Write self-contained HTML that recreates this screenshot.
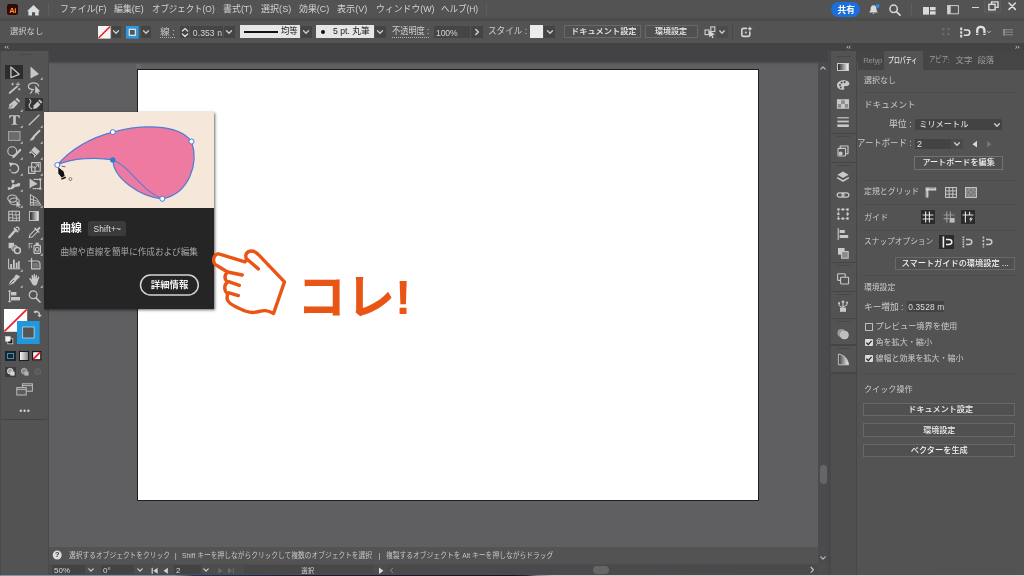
<!DOCTYPE html><html lang="ja"><head><meta charset="utf-8"><title>Adobe Illustrator</title><style>
html,body{margin:0;padding:0;background:#535353;}
body{width:1024px;height:576px;overflow:hidden;position:relative;font-family:"Liberation Sans","Noto Sans CJK JP",sans-serif;}
#app{position:absolute;left:0;top:0;width:1024px;height:576px;overflow:hidden;background:#535353;filter:blur(0.6px);}
.b,.g,.l,.t{position:absolute;}
.g{overflow:visible;pointer-events:none;}
.l{white-space:nowrap;}
.t{white-space:nowrap;line-height:1.2;transform-origin:0 50%;font-family:"Liberation Sans","Noto Sans CJK JP",sans-serif;}
</style></head><body><div id="app">
<div class="b" style="left:0px;top:16.2px;width:1024px;height:5.400000000000002px;background:linear-gradient(180deg,#535353 0,#4f4f4f 35%,#4a4a4a 62%,#4c4c4c 75%,#535353 100%);"></div>
<div class="b" style="left:0px;top:42.75px;width:1024px;height:19.25px;background:#434345;"></div>
<div class="b" style="left:0px;top:50.75px;width:47.5px;height:525.25px;background:#535353;"></div>
<div class="b" style="left:47.5px;top:50.75px;width:1.7000000000000028px;height:525.25px;background:#4a4a4b;"></div>
<div class="b" style="left:0px;top:50.75px;width:1.2px;height:525.25px;background:#4b4b4b;"></div>
<div class="b" style="left:49px;top:62px;width:768.5px;height:485px;background:#5f5f61;"></div>
<div class="b" style="left:49px;top:62px;width:768.5px;height:2.5999999999999943px;background:linear-gradient(180deg,#4e4e50,#5f5f61);"></div>
<span class="l" style="left:136.2px;top:63.72px;font-size:4.6px;line-height:5.52px;color:#7d7d80;font-weight:normal;">01</span>
<div class="b" style="left:137px;top:69px;width:622.4px;height:432px;background:#fff;border:1px solid #1e1e1e;box-sizing:border-box;"></div>
<div class="b" style="left:817.5px;top:62px;width:10.5px;height:502px;background:#4b4b4d;"></div>
<div class="b" style="left:819.6px;top:465px;width:7.199999999999932px;height:18.5px;background:#646666;border-radius:3.6px;"></div>
<svg class="g" style="left:818px;top:63.3px;" width="10" height="10"><path transform="rotate(180 5 5)" d="M2.8 3.9 L5 6.1 L7.2 3.9" fill="none" stroke="#b8b8b8" stroke-width="1.3" stroke-linecap="round" stroke-linejoin="round"/></svg>
<svg class="g" style="left:818px;top:552.5px;" width="10" height="10"><path d="M2.8 3.9 L5 6.1 L7.2 3.9" fill="none" stroke="#b8b8b8" stroke-width="1.3" stroke-linecap="round" stroke-linejoin="round"/></svg>
<div class="b" style="left:49px;top:547px;width:768.5px;height:17px;background:#535353;"></div>
<div class="b" style="left:49px;top:564px;width:779.5px;height:10.5px;background:#4d4d4d;"></div>
<div class="b" style="left:828px;top:42.75px;width:196px;height:8.25px;background:#434345;"></div>
<div class="b" style="left:828px;top:51px;width:2.5px;height:525px;background:#48484a;"></div>
<div class="b" style="left:830.5px;top:51px;width:25.5px;height:322px;background:#535353;"></div>
<div class="b" style="left:830.5px;top:373px;width:25.5px;height:203px;background:#4f4f4f;"></div>
<div class="b" style="left:856px;top:51px;width:1.3999999999999773px;height:525px;background:#464646;"></div>
<div class="b" style="left:857.5px;top:51px;width:166.5px;height:18.5px;background:#454545;"></div>
<div class="b" style="left:883.5px;top:51px;width:39.0px;height:18.5px;background:#535353;"></div>
<div class="b" style="left:857.5px;top:69.5px;width:166.5px;height:506.5px;background:#535353;"></div>
<div class="b" style="left:0px;top:574.5px;width:1024px;height:1.5px;background:linear-gradient(90deg,#8096a6 0,#7d93a4 17%,#20306a 19%,#141c3c 30%,#10142a 50%,#222a44 51.5%,#8a9096 52.5%,#c9cbcc 54%,#d6d6d6 100%);"></div>
<div class="b" style="left:7.2px;top:4.2px;width:11.0px;height:10.600000000000001px;background:#33080a;border-radius:2.2px;"></div>
<span class="l" style="left:9.2px;top:5.50px;font-size:7.6px;line-height:9.12px;color:#ff9a1f;font-weight:bold;letter-spacing:-0.3px;">Ai</span>
<svg class="g" style="left:26px;top:3px;" width="16" height="14"><path d="M7.5 2 L14 8.2 L12.6 8.2 L12.6 12.4 L9.1 12.4 L9.1 9.2 L6 9.2 L6 12.4 L2.4 12.4 L2.4 8.2 L1 8.2 Z" fill="#dcdcdc"/></svg>
<div class="b" style="left:48px;top:3px;width:1px;height:13px;background:#5e5e5e;"></div>
<span class="t" style="left:60.0px;top:3.6px;font-size:9.3px;color:#d2d2d2;transform:scaleX(0.948);">ファイル(F)</span>
<span class="t" style="left:114.0px;top:3.6px;font-size:9.3px;color:#d2d2d2;transform:scaleX(0.957);">編集(E)</span>
<span class="t" style="left:152.0px;top:3.6px;font-size:9.3px;color:#d2d2d2;transform:scaleX(0.906);">オブジェクト(O)</span>
<span class="t" style="left:223.0px;top:3.6px;font-size:9.3px;color:#d2d2d2;transform:scaleX(0.962);">書式(T)</span>
<span class="t" style="left:261.0px;top:3.6px;font-size:9.3px;color:#d2d2d2;transform:scaleX(0.974);">選択(S)</span>
<span class="t" style="left:299.0px;top:3.6px;font-size:9.3px;color:#d2d2d2;transform:scaleX(0.959);">効果(C)</span>
<span class="t" style="left:337.0px;top:3.6px;font-size:9.3px;color:#d2d2d2;transform:scaleX(0.978);">表示(V)</span>
<span class="t" style="left:375.5px;top:3.6px;font-size:9.3px;color:#d2d2d2;transform:scaleX(0.952);">ウィンドウ(W)</span>
<span class="t" style="left:440.5px;top:3.6px;font-size:9.3px;color:#d2d2d2;transform:scaleX(0.911);">ヘルプ(H)</span>
<div class="b" style="left:486px;top:3px;width:1px;height:13px;background:#5e5e5e;"></div>
<div class="b" style="left:831px;top:2.2px;width:29.399999999999977px;height:15.2px;background:#1a6fdc;border-radius:7.6px;"></div>
<span class="t" style="left:837.5px;top:4.5px;font-size:8.7px;color:#fff;font-weight:bold;">共有</span>
<svg class="g" style="left:867px;top:3px;" width="14" height="14"><path d="M6.5 2.2 C4.3 2.2 3.6 4 3.6 5.8 C3.6 7.8 2.8 8.6 2.2 9.4 L10.8 9.4 C10.2 8.6 9.4 7.8 9.4 5.8 C9.4 4 8.7 2.2 6.5 2.2 Z M5.3 10.2 a1.3 1.3 0 0 0 2.4 0 Z" fill="#d8d8d8"/><circle cx="10.6" cy="3" r="1.9" fill="#2b8cf0"/></svg>
<svg class="g" style="left:887px;top:2px;" width="16" height="16"><circle cx="6.6" cy="6.8" r="3.7" fill="none" stroke="#d8d8d8" stroke-width="1.5"/><path d="M9.4 9.6 L13 13.2" stroke="#d8d8d8" stroke-width="1.7" stroke-linecap="round"/></svg>
<div class="b" style="left:910.5px;top:3px;width:1.0px;height:13px;background:#5e5e5e;"></div>
<svg class="g" style="left:923px;top:6.8px;" width="13" height="8"><rect x="0" y="0" width="6" height="7.6" fill="#dadada"/><rect x="7" y="0" width="5.6" height="3.3" fill="#dadada"/><rect x="7" y="4.3" width="5.6" height="3.3" fill="#dadada"/></svg>
<svg class="g" style="left:946.5px;top:5.4px;" width="13" height="10"><rect x="0.6" y="0.6" width="10.8" height="8.2" fill="none" stroke="#cdcdcd" stroke-width="1"/><rect x="0.7" y="0.7" width="3" height="8" fill="#d0d0d0"/></svg>
<div class="b" style="left:984px;top:-1px;width:16.5px;height:13.6px;background:#555555;border:1px solid #5d5d5d;box-sizing:border-box;"></div>
<div class="b" style="left:971.5px;top:6.8px;width:7.5px;height:1.5000000000000009px;background:#d6d6d6;"></div>
<svg class="g" style="left:988px;top:1px;" width="13" height="11"><rect x="0.9" y="3.3" width="6.2" height="5.6" fill="none" stroke="#dcdcdc" stroke-width="1.4"/><path d="M3.6 3 L3.6 0.9 L10 0.9 L10 6.4 L7.4 6.4" fill="none" stroke="#dcdcdc" stroke-width="1.4"/></svg>
<svg class="g" style="left:1008px;top:2px;" width="9" height="9"><path d="M1 1 L7.4 7.4 M7.4 1 L1 7.4" stroke="#dcdcdc" stroke-width="1.5" stroke-linecap="round"/></svg>
<span class="t" style="left:10.0px;top:26.8px;font-size:8.3px;color:#cfcfcf;">選択なし</span>
<svg class="g" style="left:97.5px;top:25.5px;" width="13" height="13"><rect x="0" y="0" width="12.6" height="12.6" fill="#f4f4f4"/><path d="M0.6 12 L12 0.6" stroke="#e8212b" stroke-width="1.5"/></svg>
<div class="b" style="left:111.5px;top:25.5px;width:9.5px;height:12.700000000000003px;background:#444444;"></div>
<svg class="g" style="left:111.2px;top:27.200000000000003px;" width="10" height="10"><path d="M2.5 3.75 L5 6.25 L7.5 3.75" fill="none" stroke="#cccccc" stroke-width="1.35" stroke-linecap="round" stroke-linejoin="round"/></svg>
<svg class="g" style="left:126px;top:25.5px;" width="13" height="13"><rect x="0" y="0" width="12.6" height="12.6" fill="#2c98e0"/><rect x="3.3" y="3.3" width="6" height="6" fill="#555" stroke="#f2f2f2" stroke-width="1.1"/></svg>
<div class="b" style="left:140.5px;top:25.5px;width:10.5px;height:12.700000000000003px;background:#444444;"></div>
<svg class="g" style="left:141px;top:27.200000000000003px;" width="10" height="10"><path d="M2.5 3.75 L5 6.25 L7.5 3.75" fill="none" stroke="#cccccc" stroke-width="1.35" stroke-linecap="round" stroke-linejoin="round"/></svg>
<span class="t" style="left:160.2px;top:26.1px;font-size:9.4px;color:#cfcfcf;">線 :</span>
<div class="b" style="left:160px;top:35.6px;width:15px;height:1.0px;border-bottom:1px dotted #b0b0b0;"></div>
<div class="b" style="left:179.5px;top:25.5px;width:9.5px;height:12.700000000000003px;background:#444444;"></div>
<svg class="g" style="left:179.5px;top:25.5px;" width="10" height="13"><path d="M2.4 5 L5 2.4 L7.6 5 M2.4 8 L5 10.6 L7.6 8" fill="none" stroke="#d8d8d8" stroke-width="1.4" stroke-linecap="round" stroke-linejoin="round"/></svg>
<div class="b" style="left:189.5px;top:25.5px;width:33.5px;height:12.700000000000003px;background:#454545;"></div>
<span class="l" style="left:192.8px;top:27.56px;font-size:8.6px;line-height:10.32px;color:#d4d4d4;font-weight:normal;letter-spacing:0.084px;">0.353 n</span>
<div class="b" style="left:224px;top:25.5px;width:10.5px;height:12.700000000000003px;background:#444444;"></div>
<svg class="g" style="left:224.2px;top:27.200000000000003px;" width="10" height="10"><path d="M2.5 3.75 L5 6.25 L7.5 3.75" fill="none" stroke="#cccccc" stroke-width="1.35" stroke-linecap="round" stroke-linejoin="round"/></svg>
<div class="b" style="left:240px;top:25px;width:59.5px;height:13.200000000000003px;background:#e6e6e6;"></div>
<div class="b" style="left:244px;top:31.2px;width:33.5px;height:1.8000000000000007px;background:#111;"></div>
<span class="t" style="left:281.0px;top:26.4px;font-size:9.0px;color:#1c1c1c;transform:scaleX(0.924);">均等</span>
<div class="b" style="left:300.5px;top:25.5px;width:11.0px;height:12.700000000000003px;background:#444444;"></div>
<svg class="g" style="left:301px;top:27.200000000000003px;" width="10" height="10"><path d="M2.5 3.75 L5 6.25 L7.5 3.75" fill="none" stroke="#cccccc" stroke-width="1.35" stroke-linecap="round" stroke-linejoin="round"/></svg>
<div class="b" style="left:316px;top:25px;width:58px;height:13.200000000000003px;background:#e6e6e6;"></div>
<div class="b" style="left:321.4px;top:30.4px;width:3.2000000000000455px;height:3.200000000000003px;background:#111;border-radius:2px;"></div>
<span class="t" style="left:332.5px;top:26.4px;font-size:9.0px;color:#1c1c1c;transform:scaleX(0.964);">5 pt. 丸筆</span>
<div class="b" style="left:375px;top:25.5px;width:10.5px;height:12.700000000000003px;background:#444444;"></div>
<svg class="g" style="left:375.2px;top:27.200000000000003px;" width="10" height="10"><path d="M2.5 3.75 L5 6.25 L7.5 3.75" fill="none" stroke="#cccccc" stroke-width="1.35" stroke-linecap="round" stroke-linejoin="round"/></svg>
<span class="t" style="left:392.0px;top:26.2px;font-size:9.2px;color:#cfcfcf;transform:scaleX(0.892);">不透明度 :</span>
<div class="b" style="left:392px;top:35.6px;width:37px;height:1.0px;border-bottom:1px dotted #b0b0b0;"></div>
<div class="b" style="left:433.5px;top:25.5px;width:36.5px;height:12.700000000000003px;background:#454545;"></div>
<span class="l" style="left:436px;top:27.56px;font-size:8.6px;line-height:10.32px;color:#d4d4d4;font-weight:normal;letter-spacing:-0.132px;">100%</span>
<div class="b" style="left:471px;top:25.5px;width:11.5px;height:12.700000000000003px;background:#444444;"></div>
<svg class="g" style="left:472px;top:27.2px;" width="10" height="10"><path d="M3.8 2.4 L6.4 5 L3.8 7.6" fill="none" stroke="#d8d8d8" stroke-width="1.4" stroke-linecap="round" stroke-linejoin="round"/></svg>
<span class="t" style="left:487.8px;top:26.3px;font-size:9.2px;color:#cfcfcf;transform:scaleX(0.934);">スタイル :</span>
<div class="b" style="left:530px;top:25px;width:13.200000000000045px;height:13.200000000000003px;background:#ececec;"></div>
<div class="b" style="left:544.2px;top:25.5px;width:10.799999999999955px;height:12.700000000000003px;background:#444444;"></div>
<svg class="g" style="left:544.6px;top:27.200000000000003px;" width="10" height="10"><path d="M2.5 3.75 L5 6.25 L7.5 3.75" fill="none" stroke="#cccccc" stroke-width="1.35" stroke-linecap="round" stroke-linejoin="round"/></svg>
<div class="b" style="left:563.5px;top:24.6px;width:77.0px;height:13.199999999999996px;background:#505050;border:1px solid #696969;box-sizing:border-box;"></div>
<span class="t" style="left:571.0px;top:26.5px;font-size:8.2px;color:#f0f0f0;font-weight:500;">ドキュメント設定</span>
<div class="b" style="left:645px;top:24.6px;width:52.5px;height:13.199999999999996px;background:#505050;border:1px solid #696969;box-sizing:border-box;"></div>
<span class="t" style="left:655.0px;top:26.6px;font-size:8.0px;color:#f0f0f0;font-weight:500;">環境設定</span>
<svg class="g" style="left:704px;top:25.6px;" width="13" height="13"><rect x="1" y="4" width="4" height="4.6" fill="none" stroke="#cfcfcf" stroke-width="1.1"/><rect x="6.8" y="0.9" width="4" height="4.6" fill="none" stroke="#cfcfcf" stroke-width="1.1"/><path d="M4.8 4.6 L11 8.4 L8.4 9 L9.6 11.6 L8.4 12.2 L7.2 9.6 L5.4 11.4 Z" fill="#d8d8d8"/></svg>
<div class="b" style="left:717px;top:25.5px;width:11.399999999999977px;height:12.700000000000003px;background:#4b4b4b;"></div>
<svg class="g" style="left:716.9px;top:26.6px;" width="10" height="10"><path d="M2.7 3.85 L5 6.15 L7.3 3.85" fill="none" stroke="#cccccc" stroke-width="1.35" stroke-linecap="round" stroke-linejoin="round"/></svg>
<div class="b" style="left:731.6px;top:24px;width:1.0px;height:16px;background:#494949;"></div>
<svg class="g" style="left:740px;top:26.4px;" width="13" height="13"><path d="M6.4 2.4 L3.6 2.4 Q1.8 2.4 1.8 4.2 L1.8 8.6 Q1.8 10.4 3.6 10.4 L8 10.4 Q9.8 10.4 9.8 8.6 L9.8 6" fill="none" stroke="#d2d2d2" stroke-width="1.6" stroke-linecap="round"/><circle cx="5.8" cy="6.4" r="1" fill="#d2d2d2"/><path d="M9.9 0 L10.6 2 L12.6 2.7 L10.6 3.4 L9.9 5.4 L9.2 3.4 L7.2 2.7 L9.2 2 Z" fill="#dcdcdc"/></svg>
<svg class="g" style="left:942.4px;top:27.8px;" width="9" height="9"><g fill="#6a6a6a"><rect x="0" y="0" width="2.4" height="2.4"/><rect x="5.2" y="0" width="2.4" height="2.4"/><rect x="0" y="5" width="2.4" height="2.4"/><rect x="5.2" y="5" width="2.4" height="2.4"/></g></svg>
<svg class="g" style="left:958.5px;top:26.5px;" width="13" height="12"><path d="M2.2 0.6 L2.2 10.8" stroke="#e0e0e0" stroke-width="2" stroke-dasharray="2.6 1"/><path d="M4.8 3 L8.2 3 Q10.8 3 10.8 5.6 Q10.8 8.2 8.2 8.2 L4.8 8.2" fill="none" stroke="#e0e0e0" stroke-width="1.6"/></svg>
<svg class="g" style="left:974.6px;top:25.4px;" width="12" height="12"><path d="M2.2 10 L2.2 5.6 Q2.2 1.8 5.8 1.8 Q9.4 1.8 9.4 5.6 L9.4 10" fill="none" stroke="#e0e0e0" stroke-width="2.3"/><path d="M0.8 8.4 L3.2 8.4 M8 8.4 L10.4 8.4" stroke="#535353" stroke-width="0.9"/></svg>
<svg class="g" style="left:983.8px;top:27px;" width="10" height="10"><path d="M3.4 4.2 L5 5.8 L6.6 4.2" fill="none" stroke="#bbb" stroke-width="1" stroke-linecap="round" stroke-linejoin="round"/></svg>
<svg class="g" style="left:1003px;top:28.6px;" width="11" height="7"><g fill="#7c7c7c"><rect x="0" y="0" width="10" height="1.4"/><rect x="0" y="2.5" width="10" height="1.4"/><rect x="0" y="5" width="10" height="1.4"/></g><rect x="0" y="0" width="2" height="6.4" fill="#8a8a8a"/></svg>
<svg class="g" style="left:4.4px;top:44.6px;" width="6" height="5"><path d="M2.2 0.9 L1 2.2 L2.2 3.5 M4.4 0.9 L3.2 2.2 L4.4 3.5" fill="none" stroke="#c4c4c4" stroke-width="0.9"/></svg>
<svg class="g" style="left:846px;top:44.6px;" width="6" height="5"><path d="M2.2 0.9 L1 2.2 L2.2 3.5 M4.4 0.9 L3.2 2.2 L4.4 3.5" fill="none" stroke="#c4c4c4" stroke-width="0.9"/></svg>
<svg class="g" style="left:1014px;top:44.6px;" width="6" height="5"><path d="M2.2 0.9 L1 2.2 L2.2 3.5 M4.4 0.9 L3.2 2.2 L4.4 3.5" fill="none" stroke="#c4c4c4" stroke-width="0.9" transform="translate(6 0) scale(-1 1)"/></svg>
<div class="b" style="left:18px;top:54.2px;width:12.600000000000001px;height:1.1999999999999957px;background:#484848;"></div>
<div class="b" style="left:5px;top:64.8px;width:18px;height:14.5px;background:#2c2c2c;"></div>
<svg class="g" style="left:5px;top:64.25px;" width="18" height="16"><path d="M5.9 2.9 L5.9 13.6 L14.2 10.3 Z" fill="none" stroke="#c6c6c6" stroke-linecap="round" stroke-linejoin="round" stroke-width="1.3"/></svg>
<svg class="g" style="left:25px;top:64.25px;" width="18" height="16"><path d="M5.5 2.4 L5.5 14.4 L14 10 Z" fill="#c6c6c6"/></svg>
<svg class="g" style="left:40.2px;top:77.05px;" width="4" height="4"><path d="M2.7 0.2 L2.7 2.7 L0.2 2.7 Z" fill="#c6c6c6"/></svg>
<svg class="g" style="left:5px;top:80.25px;" width="18" height="16"><path d="M4.6 13 L12 6.6" fill="none" stroke="#c6c6c6" stroke-linecap="round" stroke-linejoin="round" stroke-width="1.7"/><path d="M13 2.6 L13 6 M11.3 4.3 L14.7 4.3 M7.6 3.2 L7.6 5 M6.7 4.1 L8.5 4.1 M14.2 8.4 L14.2 10 M13.4 9.2 L15 9.2" fill="none" stroke="#c6c6c6" stroke-linecap="round" stroke-linejoin="round" stroke-width="0.9"/></svg>
<svg class="g" style="left:25px;top:80.25px;" width="18" height="16"><path d="M8.6 9.6 C4.6 9.6 3.4 7.6 3.4 6.3 C3.4 4 6 2.8 8.6 2.8 C11.4 2.8 13.6 4.2 13.6 6 M6.6 9.4 C7.6 10.6 6.8 12.6 5.4 13.2" fill="none" stroke="#c6c6c6" stroke-linecap="round" stroke-linejoin="round" stroke-width="1.2"/><path d="M10.2 5.6 L10.2 14 L12 12.2 L13.2 14.6 L14.2 14.1 L13 11.8 L15.4 11.6 Z" fill="#c6c6c6"/></svg>
<svg class="g" style="left:5px;top:96.25px;" width="18" height="16"><path d="M3.4 13 L4.6 8.2 L9.6 4 L13 7.4 L8.6 12.2 Z" fill="#c6c6c6"/><path d="M10.4 3.2 L12 1.8 L15.2 5 L13.8 6.6 Z" fill="#c6c6c6"/><path d="M3.6 12.8 L7.6 9" stroke="#535353" stroke-width="0.8"/></svg>
<svg class="g" style="left:20.200000000000003px;top:109.05px;" width="4" height="4"><path d="M2.7 0.2 L2.7 2.7 L0.2 2.7 Z" fill="#c6c6c6"/></svg>
<div class="b" style="left:25px;top:97.6px;width:18px;height:13.100000000000009px;background:#333;"></div>
<svg class="g" style="left:25px;top:96.25px;" width="18" height="16"><path d="M8 13 L8.8 9.2 L12.6 5.6 L15.4 8.4 L11.8 12.2 Z" fill="#c6c6c6"/><path d="M13.2 4.8 L14.6 3.4 L17.4 6.2 L16 7.6 Z" fill="#c6c6c6"/><path d="M4.6 3.4 C6.4 4.2 6 6 5 7.4 C3.8 9 3.6 11.6 6.6 12.8" fill="none" stroke="#c6c6c6" stroke-linecap="round" stroke-linejoin="round" stroke-width="1.1"/></svg>
<svg class="g" style="left:8.6px;top:115.4px;" width="12" height="11"><path d="M0.4 0.2 L10.6 0.2 L10.8 3.2 L10 3.2 C9.6 1.6 9 1.2 7.6 1.2 L6.8 1.2 L6.8 8 C6.8 8.8 7.2 9 8.4 9.1 L8.4 9.7 L2.6 9.7 L2.6 9.1 C3.8 9 4.2 8.8 4.2 8 L4.2 1.2 L3.4 1.2 C2 1.2 1.4 1.6 1 3.2 L0.2 3.2 Z" fill="#c6c6c6"/></svg>
<svg class="g" style="left:20.200000000000003px;top:125.0px;" width="4" height="4"><path d="M2.7 0.2 L2.7 2.7 L0.2 2.7 Z" fill="#c6c6c6"/></svg>
<svg class="g" style="left:25px;top:112.25px;" width="18" height="16"><path d="M4.2 12.8 L14 3.2" fill="none" stroke="#c6c6c6" stroke-linecap="round" stroke-linejoin="round" stroke-width="1.3"/></svg>
<svg class="g" style="left:40.2px;top:125.05px;" width="4" height="4"><path d="M2.7 0.2 L2.7 2.7 L0.2 2.7 Z" fill="#c6c6c6"/></svg>
<svg class="g" style="left:5px;top:128.25px;" width="18" height="16"><rect x="3.6" y="3.6" width="11.4" height="8.8" fill="#6b6b6b" stroke="#a9a9a9" stroke-width="1"/></svg>
<svg class="g" style="left:20.200000000000003px;top:141.04999999999998px;" width="4" height="4"><path d="M2.7 0.2 L2.7 2.7 L0.2 2.7 Z" fill="#c6c6c6"/></svg>
<svg class="g" style="left:25px;top:128.25px;" width="18" height="16"><path d="M14.4 2.8 L8.6 8.8" fill="none" stroke="#c6c6c6" stroke-linecap="round" stroke-linejoin="round" stroke-width="2"/><path d="M8.8 8 L10 9.4 C9 11.6 7 12.8 4.4 12.6 C5.6 11.6 6 9.4 8.8 8 Z" fill="#c6c6c6"/></svg>
<svg class="g" style="left:40.2px;top:141.04999999999998px;" width="4" height="4"><path d="M2.7 0.2 L2.7 2.7 L0.2 2.7 Z" fill="#c6c6c6"/></svg>
<svg class="g" style="left:5px;top:144.25px;" width="18" height="16"><circle cx="7.2" cy="7.2" r="4.4" fill="none" stroke="#c6c6c6" stroke-linecap="round" stroke-linejoin="round" stroke-width="1.1"/><path d="M9 12.6 L15.2 6" fill="none" stroke="#c6c6c6" stroke-linecap="round" stroke-linejoin="round" stroke-width="2.2"/><path d="M7 14.4 L8 12 L9.4 13.4 Z" fill="#c6c6c6"/></svg>
<svg class="g" style="left:20.200000000000003px;top:157.04999999999998px;" width="4" height="4"><path d="M2.7 0.2 L2.7 2.7 L0.2 2.7 Z" fill="#c6c6c6"/></svg>
<svg class="g" style="left:25px;top:144.25px;" width="18" height="16"><path d="M9.6 2.6 L15 7.4 L9.4 13.6 L4 8.8 Z" fill="#c6c6c6"/><path d="M6 6.6 L11.4 11.4" stroke="#535353" stroke-width="1"/><path d="M5.6 9.4 L8.8 12.4" stroke="#3a3a3a" stroke-width="1.6"/></svg>
<svg class="g" style="left:40.2px;top:157.04999999999998px;" width="4" height="4"><path d="M2.7 0.2 L2.7 2.7 L0.2 2.7 Z" fill="#c6c6c6"/></svg>
<svg class="g" style="left:5px;top:160.25px;" width="18" height="16"><path d="M6 4.6 C9.4 2.6 13.6 4.6 13.6 8.4 C13.6 11.6 10.6 13.6 7.4 12.6" fill="none" stroke="#c6c6c6" stroke-linecap="round" stroke-linejoin="round" stroke-width="1.4"/><path d="M4 2.6 L8.6 3 L5.4 7 Z" fill="#c6c6c6"/><path d="M5 9.4 C5 10.6 5.6 11.6 6.6 12.2" fill="none" stroke="#c6c6c6" stroke-linecap="round" stroke-linejoin="round" stroke-width="1" stroke-dasharray="1.2 1.4"/></svg>
<svg class="g" style="left:20.200000000000003px;top:173.04999999999998px;" width="4" height="4"><path d="M2.7 0.2 L2.7 2.7 L0.2 2.7 Z" fill="#c6c6c6"/></svg>
<svg class="g" style="left:25px;top:160.25px;" width="18" height="16"><rect x="3.6" y="7" width="6.4" height="6.4" fill="none" stroke="#c6c6c6" stroke-linecap="round" stroke-linejoin="round" stroke-width="1.1"/><rect x="6.6" y="2.6" width="8.6" height="8.6" fill="none" stroke="#c6c6c6" stroke-linecap="round" stroke-linejoin="round" stroke-width="1.1"/><path d="M9.6 8.2 L13.4 4.4 M10.8 4.2 L13.6 4.2 L13.6 7" fill="none" stroke="#c6c6c6" stroke-linecap="round" stroke-linejoin="round" stroke-width="1"/></svg>
<svg class="g" style="left:40.2px;top:173.04999999999998px;" width="4" height="4"><path d="M2.7 0.2 L2.7 2.7 L0.2 2.7 Z" fill="#c6c6c6"/></svg>
<svg class="g" style="left:5px;top:176.25px;" width="18" height="16"><path d="M3.4 12.4 C5 12.8 6.4 11.4 7 9.6 C7.8 7 9 8.6 10.4 8.4 C12.4 8 13.4 6.4 15 7.4 C15.6 9 14.8 10.2 13.6 10.6 C11.6 11.2 10.4 10.4 9 12 C7.6 13.4 5 14 3.4 12.4 Z" fill="#c6c6c6"/><path d="M6.4 3.4 C7.4 4.4 8.6 4.4 9.6 3.6 C9 5.4 9.6 6.6 8 7.6 C7 6.6 6 5.4 6.4 3.4 Z" fill="#c6c6c6"/><circle cx="4" cy="12.6" r="1.3" fill="#c6c6c6"/></svg>
<svg class="g" style="left:20.200000000000003px;top:189.04999999999998px;" width="4" height="4"><path d="M2.7 0.2 L2.7 2.7 L0.2 2.7 Z" fill="#c6c6c6"/></svg>
<svg class="g" style="left:25px;top:176.25px;" width="18" height="16"><path d="M4.6 2.6 L4.6 12.6 L7.2 10.4 L12.6 8 Z" fill="#c6c6c6"/><path d="M9 3.4 L15.4 3.4 L15.4 12.6 L8 12.6" fill="none" stroke="#c6c6c6" stroke-linecap="round" stroke-linejoin="round" stroke-width="1.1" stroke-dasharray="1.4 1.1"/><rect x="14.2" y="2.4" width="2.2" height="2.2" fill="#c6c6c6"/><rect x="14.2" y="11.4" width="2.2" height="2.2" fill="#c6c6c6"/></svg>
<svg class="g" style="left:5px;top:192.25px;" width="18" height="16"><ellipse cx="7.4" cy="6.6" rx="4.6" ry="3.6" fill="none" stroke="#c6c6c6" stroke-linecap="round" stroke-linejoin="round" stroke-width="1.1"/><ellipse cx="9.4" cy="9.4" rx="4.8" ry="3.4" fill="none" stroke="#c6c6c6" stroke-linecap="round" stroke-linejoin="round" stroke-width="1.1"/><path d="M11.4 8.4 L11.4 15.4 L13 13.8 L14 15.8 L15 15.4 L14 13.4 L16.2 13.2 Z" fill="#c6c6c6"/></svg>
<svg class="g" style="left:20.200000000000003px;top:205.04999999999998px;" width="4" height="4"><path d="M2.7 0.2 L2.7 2.7 L0.2 2.7 Z" fill="#c6c6c6"/></svg>
<svg class="g" style="left:25px;top:192.25px;" width="18" height="16"><path d="M5.4 2.6 L5.4 13 M5.4 2.6 L11.6 6.4 L15.4 12.4 M5.4 7 L12.6 9.4 M8.4 4.4 L8.4 12.8 M5.4 13 L15.8 13 M5.4 10.4 L14.4 11.2" fill="none" stroke="#c6c6c6" stroke-linecap="round" stroke-linejoin="round" stroke-width="0.95"/></svg>
<svg class="g" style="left:40.2px;top:205.04999999999998px;" width="4" height="4"><path d="M2.7 0.2 L2.7 2.7 L0.2 2.7 Z" fill="#c6c6c6"/></svg>
<svg class="g" style="left:5px;top:208.25px;" width="18" height="16"><rect x="3.8" y="3.2" width="10.6" height="9.6" fill="none" stroke="#c6c6c6" stroke-linecap="round" stroke-linejoin="round" stroke-width="1.1"/><path d="M3.8 6.6 C7 5 10 8.6 14.4 6.4 M3.8 10 C7 8.6 10.6 12 14.4 9.6 M7.4 3.2 C6.2 6.4 9.2 9.6 7.6 12.8 M11 3.2 C9.8 6.4 12.6 9.6 11.2 12.8" fill="none" stroke="#c6c6c6" stroke-linecap="round" stroke-linejoin="round" stroke-width="0.9"/></svg>
<div class="b" style="left:28.6px;top:211.2px;width:10.8px;height:9.8px;box-sizing:border-box;border:1px solid #bdbdbd;background:linear-gradient(90deg,#2e2e2e,#e4e4e4)"></div>
<svg class="g" style="left:5px;top:224.25px;" width="18" height="16"><path d="M4.4 13 L10.6 6" fill="none" stroke="#c6c6c6" stroke-linecap="round" stroke-linejoin="round" stroke-width="2.6"/><path d="M9.4 4.4 L12.6 7.6" fill="none" stroke="#c6c6c6" stroke-linecap="round" stroke-linejoin="round" stroke-width="1.8"/><path d="M11.4 3.4 C12.6 2.6 14.4 3.6 14 6" fill="none" stroke="#c6c6c6" stroke-linecap="round" stroke-linejoin="round" stroke-width="1.3"/></svg>
<svg class="g" style="left:25px;top:224.25px;" width="18" height="16"><path d="M4.2 13.6 L5 10.8 L10.6 5.2 L12.8 7.4 L7.2 13 Z" fill="none" stroke="#c6c6c6" stroke-linecap="round" stroke-linejoin="round" stroke-width="1.05"/><path d="M10 4.2 L13.8 8" fill="none" stroke="#c6c6c6" stroke-linecap="round" stroke-linejoin="round" stroke-width="1.5"/><path d="M11.8 5.6 L13.6 3.4 C14.6 2.4 16 3.8 15 4.8 L13 6.8 Z" fill="#c6c6c6"/></svg>
<svg class="g" style="left:40.2px;top:237.04999999999998px;" width="4" height="4"><path d="M2.7 0.2 L2.7 2.7 L0.2 2.7 Z" fill="#c6c6c6"/></svg>
<svg class="g" style="left:5px;top:240.25px;" width="18" height="16"><rect x="3.6" y="2.8" width="5.4" height="5.4" fill="#c6c6c6"/><circle cx="9.6" cy="8.2" r="3" fill="#8c8c8c" stroke="#c6c6c6" stroke-width="0.9"/><circle cx="12.4" cy="10.6" r="3" fill="#535353" stroke="#c6c6c6" stroke-width="1.5"/></svg>
<svg class="g" style="left:25px;top:240.25px;" width="18" height="16"><rect x="9" y="5.4" width="6.4" height="8" rx="0.8" fill="none" stroke="#c6c6c6" stroke-linecap="round" stroke-linejoin="round" stroke-width="1.2"/><rect x="10.6" y="2.6" width="3.2" height="2.4" fill="#c6c6c6"/><circle cx="12.2" cy="9.4" r="1.9" fill="none" stroke="#c6c6c6" stroke-linecap="round" stroke-linejoin="round" stroke-width="1.1"/><path d="M4.2 3.6 L7.4 3.6 M4.2 3.6 L4.2 8 M6.4 5.6 L6.4 7.4" fill="none" stroke="#c6c6c6" stroke-linecap="round" stroke-linejoin="round" stroke-width="0.8"/></svg>
<svg class="g" style="left:40.2px;top:253.04999999999998px;" width="4" height="4"><path d="M2.7 0.2 L2.7 2.7 L0.2 2.7 Z" fill="#c6c6c6"/></svg>
<svg class="g" style="left:5px;top:256.25px;" width="18" height="16"><path d="M3.6 3 L3.6 12.8 L15 12.8" fill="none" stroke="#c6c6c6" stroke-linecap="round" stroke-linejoin="round" stroke-width="1"/><rect x="5.2" y="8" width="1.8" height="4.4" fill="#c6c6c6"/><rect x="8" y="3.6" width="1.8" height="8.8" fill="#c6c6c6"/><rect x="10.8" y="6.6" width="1.8" height="5.8" fill="#c6c6c6"/><rect x="13.2" y="5" width="1.5" height="7.4" fill="#c6c6c6"/></svg>
<svg class="g" style="left:20.200000000000003px;top:269.05px;" width="4" height="4"><path d="M2.7 0.2 L2.7 2.7 L0.2 2.7 Z" fill="#c6c6c6"/></svg>
<svg class="g" style="left:25px;top:256.25px;" width="18" height="16"><path d="M3.8 5 L12 5 Q15 5 15 8.4 L15 12.8 L6.6 12.8 L6.6 2.4" fill="none" stroke="#c6c6c6" stroke-linecap="round" stroke-linejoin="round" stroke-width="1.2"/><path d="M8 7 L13.6 7 L13.6 11.6 L8 11.6 Z" fill="#777"/></svg>
<svg class="g" style="left:5px;top:272.25px;" width="18" height="16"><path d="M3.6 13.4 L5 9.6 L10.8 3.8 L14 5.4 L8.6 11.4 Z" fill="#c6c6c6"/><path d="M9.4 4 L11.6 2.4 L15.2 4.6 L13.4 6.6" fill="#c6c6c6"/><path d="M4 13.2 L9 8" stroke="#535353" stroke-width="0.9"/></svg>
<svg class="g" style="left:20.200000000000003px;top:285.05px;" width="4" height="4"><path d="M2.7 0.2 L2.7 2.7 L0.2 2.7 Z" fill="#c6c6c6"/></svg>
<svg class="g" style="left:25px;top:272.25px;" width="18" height="16"><path d="M6 9.6 L4.4 7.2 C3.8 6.2 5 5.6 5.6 6.4 L6.8 7.8 L6.6 3.8 C6.6 2.8 7.8 2.8 8 3.8 L8.4 6.6 L8.6 2.8 C8.6 1.8 9.9 1.8 10 2.8 L10.2 6.6 L10.8 3.4 C11 2.4 12.2 2.6 12.1 3.6 L11.9 7 L13 5 C13.5 4.2 14.5 4.8 14.2 5.6 L12.8 9.6 C12.4 11.4 12 13.6 9.6 13.6 C7.6 13.6 6.8 11.4 6 9.6 Z" fill="#c6c6c6"/></svg>
<svg class="g" style="left:40.2px;top:285.05px;" width="4" height="4"><path d="M2.7 0.2 L2.7 2.7 L0.2 2.7 Z" fill="#c6c6c6"/></svg>
<svg class="g" style="left:5px;top:288.25px;" width="18" height="16"><path d="M4.6 2.6 L4.6 14" fill="none" stroke="#c6c6c6" stroke-linecap="round" stroke-linejoin="round" stroke-width="1.2"/><rect x="6" y="4" width="5.4" height="3.4" fill="#c6c6c6"/><rect x="6" y="9" width="9" height="3.4" fill="#c6c6c6"/><path d="M3.4 3.2 L5.8 3.2 M3.4 13.4 L5.8 13.4" fill="none" stroke="#c6c6c6" stroke-linecap="round" stroke-linejoin="round" stroke-width="0.8"/></svg>
<svg class="g" style="left:25px;top:288.25px;" width="18" height="16"><circle cx="8.2" cy="6.8" r="3.9" fill="none" stroke="#c6c6c6" stroke-linecap="round" stroke-linejoin="round" stroke-width="1.3"/><path d="M11 9.8 L15 14" fill="none" stroke="#c6c6c6" stroke-linecap="round" stroke-linejoin="round" stroke-width="1.7"/></svg>
<svg class="g" style="left:4.4px;top:309.4px;" width="24" height="24"><rect x="0" y="0" width="23.2" height="22.8" fill="#fdfdfd"/><path d="M0.4 22.4 L22.8 0.4" stroke="#ee1d2b" stroke-width="1.7"/></svg>
<svg class="g" style="left:16.6px;top:321.4px;" width="24" height="24"><rect x="0" y="0" width="22.6" height="23" fill="#2198dc"/><rect x="5.7" y="6" width="11.4" height="11" fill="#555" stroke="#cfe6f5" stroke-width="0.7"/></svg>
<svg class="g" style="left:33px;top:309px;" width="10" height="10"><path d="M1.6 3 C4 1.6 6.4 2.8 6.6 6.4" fill="none" stroke="#c6c6c6" stroke-linecap="round" stroke-linejoin="round" stroke-width="1.5"/><path d="M4.4 6 L6.7 8.6 L8.8 5.8 Z" fill="#c6c6c6"/><path d="M0.6 3 L3.4 1 L3.2 4.6 Z" fill="#c6c6c6"/></svg>
<svg class="g" style="left:4.6px;top:335.6px;" width="9" height="9"><rect x="2.8" y="2.8" width="5" height="5" fill="#111" stroke="#d8d8d8" stroke-width="0.8"/><rect x="0.6" y="0.6" width="4.6" height="4.6" fill="#f4f4f4" stroke="#d8d8d8" stroke-width="0.6"/></svg>
<div class="b" style="left:5.2px;top:351px;width:10.399999999999999px;height:9.800000000000011px;background:#232323;"></div>
<div class="b" style="left:7.2px;top:352.8px;width:6.3999999999999995px;height:6.199999999999989px;border:1.3px solid #1f96dc;box-sizing:border-box;"></div>
<div class="b" style="left:19.4px;top:351.2px;width:9.2px;height:9.4px;box-sizing:border-box;border:1.2px solid #1c1c1c;background:linear-gradient(90deg,#f6f6f6,#8a8a8a)"></div>
<svg class="g" style="left:32.4px;top:351.2px;" width="10" height="10"><rect x="0.6" y="0.6" width="8.2" height="8.2" fill="#fafafa" stroke="#1c1c1c" stroke-width="1.2"/><path d="M1.4 8 L8 1.4" stroke="#ee1d2b" stroke-width="1.8"/></svg>
<div class="b" style="left:5.2px;top:367px;width:10.8px;height:9.600000000000023px;background:#3c3c3c;"></div>
<svg class="g" style="left:5.6px;top:367px;" width="10" height="10"><circle cx="4.2" cy="4.2" r="2.9" fill="#a8a8a8" stroke="#d8d8d8" stroke-width="0.8"/><rect x="4.4" y="4.6" width="4.2" height="4" fill="#d8d8d8"/></svg>
<svg class="g" style="left:19.6px;top:367px;" width="10" height="10"><circle cx="4.2" cy="4.2" r="2.9" fill="#8a8a8a" stroke="#b4b4b4" stroke-width="0.8"/><rect x="4.4" y="4.6" width="4.2" height="4" fill="#b4b4b4"/></svg>
<svg class="g" style="left:32.6px;top:367px;" width="10" height="10"><circle cx="4.6" cy="4.6" r="2.9" fill="none" stroke="#6e6e6e" stroke-width="0.9"/><circle cx="4.6" cy="4.6" r="1.1" fill="#6a6a6a"/></svg>
<svg class="g" style="left:15.6px;top:382.6px;" width="18" height="14"><rect x="6.4" y="0.8" width="10" height="7.4" fill="#5c5c5c" stroke="#bdbdbd" stroke-width="1"/><path d="M6.4 2.6 L16.4 2.6" stroke="#bdbdbd" stroke-width="0.9"/><rect x="0.8" y="4.6" width="9.4" height="7.4" fill="#5c5c5c" stroke="#bdbdbd" stroke-width="1"/><path d="M0.8 6.4 L10.2 6.4" stroke="#bdbdbd" stroke-width="0.9"/></svg>
<svg class="g" style="left:18.6px;top:408.6px;" width="12" height="4"><circle cx="1.8" cy="1.8" r="1.2" fill="#d0d0d0"/><circle cx="5.6" cy="1.8" r="1.2" fill="#d0d0d0"/><circle cx="9.4" cy="1.8" r="1.2" fill="#d0d0d0"/></svg>
<div class="b" style="left:1.2px;top:419.2px;width:46.3px;height:1.1999999999999886px;background:#434343;"></div>
<div class="b" style="left:43.8px;top:111.8px;width:170.2px;height:197.59999999999997px;box-shadow:0.8px 1.2px 2.6px rgba(0,0,0,0.6);background:#252525"></div>
<div class="b" style="left:43.8px;top:111.8px;width:170.2px;height:96.00000000000001px;background:#f5e7d9;"></div>
<svg class="g" style="left:0px;top:0px;" width="260" height="320"><path d="M57.3 165.0 C72 148 92 137.5 112.8 132.1 C138 125 178 122.5 191.5 141.5 C199 163 189.5 193.5 162.3 198.8 C140 197 113.5 178 112.8 159.9 C98 157.3 72 157.6 57.3 165.0 Z" fill="#ee7aa2" stroke="#4d7fd6" stroke-width="1.25" stroke-linejoin="round"/><path d="M112.8 159.9 C130 166 140 190 162.3 198.8" fill="none" stroke="#4d7fd6" stroke-width="1.1"/><circle cx="57.3" cy="165.0" r="2.5" fill="#fff" stroke="#4d7fd6" stroke-width="1"/><circle cx="112.8" cy="132.1" r="2.5" fill="#fff" stroke="#4d7fd6" stroke-width="1"/><circle cx="191.5" cy="141.5" r="2.5" fill="#fff" stroke="#4d7fd6" stroke-width="1"/><circle cx="162.3" cy="198.8" r="2.5" fill="#fff" stroke="#4d7fd6" stroke-width="1"/><circle cx="112.8" cy="159.9" r="2.7" fill="#2f7ad6"/><path d="M58.2 167.2 L63.6 171.6 L64.6 176 L61.6 177.4 L58.4 173.6 Z" fill="#111"/><path d="M61 178.4 L65.4 176.4 L66 178 L61.8 179.8 Z" fill="#111"/><path d="M61.6 166.2 L65.4 166.8" stroke="#333" stroke-width="0.7"/><circle cx="70.4" cy="179.1" r="1.5" fill="#f5e7d9" stroke="#555" stroke-width="0.7"/></svg>
<span class="t" style="left:60.3px;top:222.3px;font-size:10.8px;color:#fafafa;font-weight:bold;">曲線</span>
<div class="b" style="left:87.8px;top:220.5px;width:38.400000000000006px;height:15.699999999999989px;background:#3b3b3b;border-radius:2.5px;"></div>
<span class="l" style="left:93.4px;top:224.06px;font-size:8.4px;line-height:10.08px;color:#dedede;font-weight:normal;letter-spacing:0.163px;">Shift+~</span>
<span class="t" style="left:60.4px;top:246.6px;font-size:8.6px;color:#a6a6a6;">曲線や直線を簡単に作成および編集</span>
<svg class="g" style="left:138px;top:272px;" width="64" height="26"><rect x="2.5" y="3" width="57.8" height="20" rx="10" fill="none" stroke="#d4d4d4" stroke-width="1.5"/></svg>
<span class="t" style="left:150.8px;top:279.2px;font-size:9.4px;color:#f0f0f0;font-weight:bold;">詳細情報</span>
<svg class="g" style="left:0px;top:0px;" width="300" height="330"><path d="M244.94 261.88 L219.62 254.06 C213.38 252.50 211.03 263.44 217.28 265.78 L227.44 272.03 C224.00 275.62 224.31 279.06 227.44 282.19 C223.53 285.31 224.00 290.78 227.75 293.91 C225.88 299.38 227.44 302.50 235.25 306.41 C243.06 310.31 249.31 313.44 255.56 312.19 C261.81 311.09 265.72 308.75 273.53 313.44 L284.47 281.88 L258.69 254.84 C253.22 248.59 244.94 250.94 245.88 256.41 C246.19 259.53 246.97 261.09 244.94 261.88 Z" fill="#fff" stroke="#e95515" stroke-width="3.4" stroke-linejoin="round" stroke-linecap="round"/><path d="M247.44 259.53 L258.38 268.91 M227.44 272.03 L242.28 275.00 M228.69 281.72 L239.31 285.31 M229.00 292.81 L238.38 295.62" fill="none" stroke="#e95515" stroke-width="3.4" stroke-linecap="round"/></svg>
<svg class="g" style="left:0px;top:0px;" width="10" height="10"><text x="297" y="314" font-size="49" font-weight="bold" fill="#e95515" font-family="'Liberation Sans','Noto Sans CJK JP',sans-serif">コレ!</text></svg>
<div class="b" style="left:837px;top:55.6px;width:12.5px;height:1.0px;background:#474747;"></div>
<div class="b" style="left:837.2px;top:62.6px;width:12px;height:8.2px;box-sizing:border-box;border:1px solid #c9c9c9;background:linear-gradient(90deg,#2a2a2a,#f0f0f0)"></div>
<svg class="g" style="left:835.2px;top:77.4px;" width="16" height="16"><path d="M8.4 3.2 C4.4 3.2 2 5.6 2 8.2 C2 11 4.6 12.8 8 12.8 C9.6 12.8 9.6 11.6 9 10.8 C8.4 9.8 9.2 9 10.4 9 L12 9 C13.4 9 14.4 8 14.4 6.8 C14.4 4.6 11.6 3.2 8.4 3.2 Z" fill="#c9c9c9"/><circle cx="5" cy="8" r="1.1" fill="#535353"/><circle cx="6.6" cy="5.6" r="1.1" fill="#535353"/><circle cx="9.6" cy="5.2" r="1.1" fill="#535353"/><circle cx="5.8" cy="10.6" r="1" fill="#535353"/></svg>
<svg class="g" style="left:835.2px;top:95.8px;" width="16" height="16"><rect x="2.4" y="3.8" width="11.2" height="8.4" fill="#8c8c8c" stroke="#c9c9c9" stroke-width="1"/><rect x="2.4" y="3.8" width="3.8" height="4.2" fill="#c9c9c9"/><rect x="9.8" y="3.8" width="3.8" height="4.2" fill="#c9c9c9"/><rect x="6.2" y="8" width="3.6" height="4.2" fill="#c9c9c9"/></svg>
<svg class="g" style="left:835.2px;top:114.0px;" width="16" height="16"><rect x="2.4" y="3.2" width="11.4" height="1.2" fill="#c9c9c9"/><rect x="2.4" y="6.6" width="11.4" height="1.8" fill="#c9c9c9"/><rect x="2.4" y="10.4" width="11.4" height="2.6" fill="#c9c9c9"/></svg>
<div class="b" style="left:830.5px;top:132.6px;width:25.5px;height:1.1999999999999886px;background:#454545;"></div>
<div class="b" style="left:837px;top:136.0px;width:12.5px;height:1.0px;background:#474747;"></div>
<svg class="g" style="left:835.2px;top:143.0px;" width="16" height="16"><path d="M5.2 5 L5.2 3 L13 3 L13 10.8 L11 10.8" fill="none" stroke="#c9c9c9" stroke-linecap="round" stroke-linejoin="round" stroke-width="1.1"/><rect x="3" y="5.4" width="7.6" height="7.6" rx="0.8" fill="none" stroke="#c9c9c9" stroke-linecap="round" stroke-linejoin="round" stroke-width="1.1"/><circle cx="5.6" cy="10.4" r="2" fill="#c9c9c9"/></svg>
<div class="b" style="left:830.5px;top:161.8px;width:25.5px;height:1.1999999999999886px;background:#454545;"></div>
<div class="b" style="left:837px;top:165.20000000000002px;width:12.5px;height:1.0px;background:#474747;"></div>
<svg class="g" style="left:835.2px;top:169.4px;" width="16" height="16"><path d="M8 2.6 L13.6 5.8 L8 9 L2.4 5.8 Z" fill="#c9c9c9"/><path d="M2.6 8.8 L8 12 L13.4 8.8" fill="none" stroke="#c9c9c9" stroke-linecap="round" stroke-linejoin="round" stroke-width="1.5"/></svg>
<svg class="g" style="left:835.2px;top:187.2px;" width="16" height="16"><rect x="2.2" y="5.8" width="6.8" height="4.4" rx="2.2" fill="none" stroke="#c9c9c9" stroke-linecap="round" stroke-linejoin="round" stroke-width="1.2"/><rect x="7" y="5.8" width="6.8" height="4.4" rx="2.2" fill="none" stroke="#c9c9c9" stroke-linecap="round" stroke-linejoin="round" stroke-width="1.2"/></svg>
<svg class="g" style="left:835.2px;top:206.4px;" width="16" height="16"><rect x="3.4" y="3.4" width="9.2" height="9.2" fill="none" stroke="#c9c9c9" stroke-width="1" stroke-dasharray="1.2 1.2"/><rect x="2.3" y="2.3" width="2.2" height="2.2" fill="#c9c9c9"/><rect x="2.3" y="6.9" width="2.2" height="2.2" fill="#c9c9c9"/><rect x="2.3" y="11.5" width="2.2" height="2.2" fill="#c9c9c9"/><rect x="6.9" y="2.3" width="2.2" height="2.2" fill="#c9c9c9"/><rect x="6.9" y="11.5" width="2.2" height="2.2" fill="#c9c9c9"/><rect x="11.5" y="2.3" width="2.2" height="2.2" fill="#c9c9c9"/><rect x="11.5" y="6.9" width="2.2" height="2.2" fill="#c9c9c9"/><rect x="11.5" y="11.5" width="2.2" height="2.2" fill="#c9c9c9"/></svg>
<svg class="g" style="left:835.2px;top:225.6px;" width="16" height="16"><path d="M3.2 2.6 L3.2 13.4" fill="none" stroke="#c9c9c9" stroke-linecap="round" stroke-linejoin="round" stroke-width="1.1"/><rect x="4.6" y="4" width="5.2" height="3" fill="#c9c9c9"/><rect x="4.6" y="9" width="8.6" height="3" fill="#c9c9c9"/></svg>
<svg class="g" style="left:835.2px;top:244.8px;" width="16" height="16"><rect x="3" y="3" width="6.6" height="6.6" fill="#c9c9c9"/><rect x="6.6" y="6.6" width="6.6" height="6.6" fill="#8a8a8a" stroke="#c9c9c9" stroke-width="1"/></svg>
<div class="b" style="left:830.5px;top:262px;width:25.5px;height:1.1999999999999886px;background:#454545;"></div>
<div class="b" style="left:837px;top:265.4px;width:12.5px;height:1.0px;background:#474747;"></div>
<svg class="g" style="left:835.2px;top:271.2px;" width="16" height="16"><rect x="2.6" y="2.8" width="7.6" height="6.6" rx="0.8" fill="none" stroke="#c9c9c9" stroke-linecap="round" stroke-linejoin="round" stroke-width="1.1"/><rect x="5.6" y="6.2" width="8" height="6.8" rx="0.8" fill="#535353" stroke="#c9c9c9" stroke-width="1.1"/></svg>
<div class="b" style="left:830.5px;top:290.6px;width:25.5px;height:1.1999999999999886px;background:#454545;"></div>
<div class="b" style="left:837px;top:294.0px;width:12.5px;height:1.0px;background:#474747;"></div>
<svg class="g" style="left:835.2px;top:298.0px;" width="16" height="16"><path d="M8 2 L10 4.6 L8.6 4.6 L8.6 9.6 L7.4 9.6 L7.4 4.6 L6 4.6 Z" fill="#c9c9c9"/><path d="M4 5.6 L4 7.4 L7.6 9.6 M12 4.8 L12 6.8 L8.4 9" fill="none" stroke="#c9c9c9" stroke-linecap="round" stroke-linejoin="round" stroke-width="1"/><rect x="3.2" y="4.2" width="1.8" height="1.8" fill="#c9c9c9"/><circle cx="12" cy="4.4" r="1" fill="#c9c9c9"/><rect x="5" y="9.6" width="6" height="4.2" fill="#c9c9c9"/></svg>
<div class="b" style="left:830.5px;top:317.6px;width:25.5px;height:1.1999999999999886px;background:#454545;"></div>
<div class="b" style="left:837px;top:321.0px;width:12.5px;height:1.0px;background:#474747;"></div>
<svg class="g" style="left:835.2px;top:325.6px;" width="16" height="16"><circle cx="6.4" cy="7" r="4" fill="#9a9a9a"/><circle cx="9.4" cy="9" r="4" fill="#bdbdbd" stroke="#c9c9c9" stroke-width="0.8"/></svg>
<div class="b" style="left:830.5px;top:344.4px;width:25.5px;height:1.1999999999999886px;background:#454545;"></div>
<div class="b" style="left:837px;top:347.79999999999995px;width:12.5px;height:1.0px;background:#474747;"></div>
<svg class="g" style="left:836.8px;top:353px" width="13" height="13"><defs><linearGradient id="qg" x1="0" x2="1"><stop offset="0" stop-color="#3a3a3a"/><stop offset="1" stop-color="#f2f2f2"/></linearGradient></defs><path d="M1.4 1.2 C7 1.6 11 6 11.6 11.8 L1.4 11.8 Z" fill="url(#qg)" stroke="#c9c9c9" stroke-width="0.9"/></svg>
<div class="b" style="left:830.5px;top:372.4px;width:25.5px;height:1.2000000000000455px;background:#454545;"></div>
<span class="l" style="left:863.2px;top:55.99px;font-size:7.8px;line-height:9.36px;color:#939393;font-weight:normal;letter-spacing:-0.294px;">Retyp</span>
<span class="t" style="left:888.0px;top:55.0px;font-size:8.4px;color:#ececec;font-weight:500;transform:scaleX(0.707);">プロパティ</span>
<span class="t" style="left:928.6px;top:55.1px;font-size:8.2px;color:#9c9c9c;transform:scaleX(0.778);">アピア</span>
<span class="l" style="left:947.2px;top:55.68px;font-size:8px;line-height:9.60px;color:#9c9c9c;font-weight:normal;">:</span>
<span class="t" style="left:955.5px;top:54.9px;font-size:8.5px;color:#9c9c9c;">文字</span>
<span class="t" style="left:977.4px;top:55.0px;font-size:8.4px;color:#9c9c9c;">段落</span>
<span class="t" style="left:864.0px;top:76.2px;font-size:8.0px;color:#cbcbcb;">選択なし</span>
<div class="b" style="left:861px;top:91.6px;width:156px;height:1.0px;background:#4d4d4d;"></div>
<span class="t" style="left:864.0px;top:99.9px;font-size:8.6px;color:#cbcbcb;">ドキュメント</span>
<span class="t" style="left:888.7px;top:119.2px;font-size:9.2px;color:#cbcbcb;transform:scaleX(0.965);">単位 :</span>
<div class="b" style="left:915.3px;top:119.3px;width:87.0px;height:10.500000000000014px;background:#434343;border-radius:1.5px;"></div>
<span class="t" style="left:919.2px;top:119.7px;font-size:8.2px;color:#efefef;">ミリメートル</span>
<svg class="g" style="left:991.6px;top:119.8px;" width="10" height="10"><path d="M2.6 3.8 L5 6.2 L7.4 3.8" fill="none" stroke="#cccccc" stroke-width="1.4" stroke-linecap="round" stroke-linejoin="round"/></svg>
<span class="t" style="left:856.8px;top:138.1px;font-size:9.2px;color:#cbcbcb;transform:scaleX(0.914);">アートボード :</span>
<div class="b" style="left:915.3px;top:138.5px;width:35.40000000000009px;height:10.300000000000011px;background:#434343;"></div>
<span class="l" style="left:917px;top:138.94px;font-size:9px;line-height:10.80px;color:#e4e4e4;font-weight:normal;">2</span>
<div class="b" style="left:951.4px;top:138.5px;width:12.0px;height:10.300000000000011px;background:#4a4a4a;"></div>
<svg class="g" style="left:952.4px;top:138.8px;" width="10" height="10"><path d="M2.6 3.8 L5 6.2 L7.4 3.8" fill="none" stroke="#cccccc" stroke-width="1.4" stroke-linecap="round" stroke-linejoin="round"/></svg>
<svg class="g" style="left:971px;top:139.6px;" width="8" height="9"><path d="M6 0.8 L6 7.6 L1.4 4.2 Z" fill="#d8d8d8"/></svg>
<svg class="g" style="left:985px;top:139.6px;" width="8" height="9"><path d="M2 0.8 L2 7.6 L6.6 4.2 Z" fill="#727272"/></svg>
<div class="b" style="left:913.7px;top:155.8px;width:89.0px;height:14.199999999999989px;background:#505050;border:1px solid #727272;box-sizing:border-box;"></div>
<span class="t" style="left:922.4px;top:158.3px;font-size:8.1px;color:#f2f2f2;font-weight:500;">アートボードを編集</span>
<div class="b" style="left:861px;top:179.6px;width:156px;height:1.0px;background:#4d4d4d;"></div>
<span class="t" style="left:864.0px;top:187.3px;font-size:7.9px;color:#cbcbcb;">定規とグリッド</span>
<svg class="g" style="left:925.2px;top:186.6px;" width="12" height="11"><path d="M0.6 10.6 L0.6 0.6 L11.2 0.6 L11.2 3.4 L3.4 3.4 L3.4 10.6 Z" fill="#cfcfcf"/><path d="M5 0.6 L5 2 M7 0.6 L7 2 M9 0.6 L9 2 M0.6 5 L2 5 M0.6 7 L2 7 M0.6 9 L2 9" stroke="#535353" stroke-width="0.7"/></svg>
<svg class="g" style="left:944.6px;top:186.6px;" width="12" height="11"><rect x="0.6" y="0.6" width="10.8" height="9.8" fill="none" stroke="#cfcfcf" stroke-width="1"/><path d="M4.2 0.6 L4.2 10.4 M7.8 0.6 L7.8 10.4 M0.6 3.9 L11.4 3.9 M0.6 7.2 L11.4 7.2" stroke="#cfcfcf" stroke-width="0.9"/></svg>
<svg class="g" style="left:965.2px;top:186.6px;" width="12" height="11"><rect x="0.6" y="0.6" width="10.8" height="9.8" fill="#777" stroke="#cfcfcf" stroke-width="1"/><path d="M0.6 5.5 L6 0.6 L11.4 5.5 L6 10.4 Z M3.3 3 L8.7 8 M8.7 3 L3.3 8" fill="none" stroke="#a8a8a8" stroke-width="0.7"/></svg>
<div class="b" style="left:861px;top:203.6px;width:156px;height:1.0px;background:#4d4d4d;"></div>
<span class="t" style="left:864.0px;top:212.5px;font-size:8.1px;color:#cbcbcb;">ガイド</span>
<div class="b" style="left:921px;top:210.3px;width:14px;height:13.899999999999977px;background:#2b2b2b;"></div>
<svg class="g" style="left:921px;top:210.3px;" width="14" height="14"><path d="M4.6 1.6 L4.6 12.4 M8.4 1.6 L8.4 12.4 M1.6 5 L12.4 5 M1.6 9 L12.4 9" stroke="#e4e4e4" stroke-width="1.1"/></svg>
<svg class="g" style="left:941.6px;top:210.3px;" width="14" height="14"><path d="M4.8 1.6 L4.8 12.4 M8.4 1.6 L8.4 8 M1.6 5 L12.4 5 M1.6 8.6 L7 8.6" stroke="#9a9a9a" stroke-width="1.1"/><rect x="7.6" y="8" width="5" height="4.6" fill="#bdbdbd"/></svg>
<div class="b" style="left:961px;top:210.3px;width:14px;height:13.899999999999977px;background:#2b2b2b;"></div>
<svg class="g" style="left:961px;top:210.3px;" width="14" height="14"><path d="M4.4 1.6 L4.4 12.4 M1.6 5 L12.4 5 M8.6 1.8 L8.6 5" stroke="#e4e4e4" stroke-width="1.1"/><path d="M10.6 6.4 L8 9.6 L9.8 9.6 L8.6 12.6 L12 8.6 L10 8.6 Z" fill="#e4e4e4"/></svg>
<div class="b" style="left:861px;top:230px;width:156px;height:1px;background:#4d4d4d;"></div>
<span class="t" style="left:864.0px;top:237.4px;font-size:7.7px;color:#cbcbcb;">スナップオプション</span>
<div class="b" style="left:939.3px;top:235.4px;width:14.400000000000091px;height:13.599999999999994px;background:#2b2b2b;"></div>
<svg class="g" style="left:939.6px;top:235.4px;" width="14" height="14"><path d="M3.4 1.4 L3.4 12.6" stroke="#f0f0f0" stroke-width="1.6"/><path d="M6 4.6 L9 4.6 Q11.8 4.6 11.8 7 Q11.8 9.4 9 9.4 L6 9.4" fill="none" stroke="#f0f0f0" stroke-width="1.5"/></svg>
<svg class="g" style="left:959.6px;top:235.4px;" width="14" height="14"><path d="M3.4 1.4 L3.4 12.6" stroke="#c8c8c8" stroke-width="1.6" stroke-dasharray="1.6 0.8"/><path d="M6 4.6 L9 4.6 Q11.8 4.6 11.8 7 Q11.8 9.4 9 9.4 L6 9.4" fill="none" stroke="#c8c8c8" stroke-width="1.5"/></svg>
<svg class="g" style="left:980px;top:235.4px;" width="14" height="14"><path d="M3.4 1.4 L3.4 12.6" stroke="#c8c8c8" stroke-width="1.6" stroke-dasharray="2.2 1.2"/><path d="M6 4.6 L9 4.6 Q11.8 4.6 11.8 7 Q11.8 9.4 9 9.4 L6 9.4" fill="none" stroke="#c8c8c8" stroke-width="1.5"/></svg>
<div class="b" style="left:894.8px;top:257px;width:120.5px;height:13px;background:#505050;border:1px solid #696969;box-sizing:border-box;"></div>
<span class="t" style="left:901.6px;top:258.9px;font-size:8.2px;color:#f2f2f2;font-weight:500;">スマートガイドの環境設定 ...</span>
<div class="b" style="left:861px;top:274.6px;width:156px;height:1.0px;background:#4d4d4d;"></div>
<span class="t" style="left:864.0px;top:282.5px;font-size:7.8px;color:#cbcbcb;">環境設定</span>
<span class="t" style="left:864.0px;top:301.5px;font-size:9.2px;color:#cbcbcb;transform:scaleX(0.943);">キー増加 :</span>
<div class="b" style="left:906.5px;top:300.8px;width:37.5px;height:11.0px;background:#434343;"></div>
<span class="l" style="left:908.2px;top:302.26px;font-size:8.4px;line-height:10.08px;color:#dedede;font-weight:normal;letter-spacing:0.168px;width:35.6px;overflow:hidden;">0.3528 m</span>
<div class="b" style="left:865.3px;top:323.3px;width:8.0px;height:7.599999999999966px;border:1px solid #bdbdbd;box-sizing:border-box;"></div>
<span class="t" style="left:875.4px;top:322.1px;font-size:8.2px;color:#cbcbcb;">プレビュー境界を使用</span>
<div class="b" style="left:865.3px;top:338.6px;width:8.0px;height:7.699999999999989px;background:#dadada;border-radius:1px;"></div>
<svg class="g" style="left:865.3px;top:338.6px;" width="8" height="8"><path d="M1.7 4 L3.3 5.7 L6.3 2.2" fill="none" stroke="#2c2c2c" stroke-width="1.3" stroke-linecap="round" stroke-linejoin="round"/></svg>
<span class="t" style="left:875.4px;top:338.4px;font-size:8.1px;color:#cbcbcb;">角を拡大・縮小</span>
<div class="b" style="left:865.3px;top:354.6px;width:8.0px;height:7.699999999999989px;background:#dadada;border-radius:1px;"></div>
<svg class="g" style="left:865.3px;top:354.6px;" width="8" height="8"><path d="M1.7 4 L3.3 5.7 L6.3 2.2" fill="none" stroke="#2c2c2c" stroke-width="1.3" stroke-linecap="round" stroke-linejoin="round"/></svg>
<span class="t" style="left:875.4px;top:354.0px;font-size:8.0px;color:#cbcbcb;">線幅と効果を拡大・縮小</span>
<div class="b" style="left:861px;top:372.8px;width:156px;height:1.0px;background:#4d4d4d;"></div>
<span class="t" style="left:864.0px;top:385.4px;font-size:8.1px;color:#cbcbcb;">クイック操作</span>
<div class="b" style="left:863.2px;top:402.5px;width:151.5999999999999px;height:13.300000000000011px;background:#505050;border:1px solid #686868;box-sizing:border-box;"></div>
<span class="t" style="left:908.3px;top:404.7px;font-size:8.1px;color:#f2f2f2;font-weight:500;">ドキュメント設定</span>
<div class="b" style="left:863.2px;top:423.3px;width:151.5999999999999px;height:13.399999999999977px;background:#505050;border:1px solid #686868;box-sizing:border-box;"></div>
<span class="t" style="left:923.3px;top:425.6px;font-size:8.0px;color:#f2f2f2;font-weight:500;">環境設定</span>
<div class="b" style="left:863.2px;top:444.2px;width:151.5999999999999px;height:13.300000000000011px;background:#505050;border:1px solid #686868;box-sizing:border-box;"></div>
<span class="t" style="left:910.8px;top:446.4px;font-size:8.2px;color:#f2f2f2;font-weight:500;">ベクターを生成</span>
<svg class="g" style="left:51.6px;top:549.6px;" width="11" height="11"><circle cx="5.2" cy="5" r="4.5" fill="#dcdcdc"/></svg>
<span class="l" style="left:54.9px;top:550.60px;font-size:7.4px;line-height:8.88px;color:#3a3a3a;font-weight:bold;">?</span>
<span class="t" style="left:69.3px;top:550.7px;font-size:7.6px;color:#c6c6c6;transform:scaleX(0.887);">選択するオブジェクトをクリック</span>
<span class="l" style="left:174.8px;top:550.90px;font-size:7.6px;line-height:9.12px;color:#c6c6c6;font-weight:normal;">|</span>
<span class="t" style="left:181.8px;top:550.7px;font-size:7.6px;color:#c6c6c6;transform:scaleX(0.886);">Shift キーを押しながらクリックして複数のオブジェクトを選択</span>
<span class="l" style="left:378.6px;top:550.90px;font-size:7.6px;line-height:9.12px;color:#c6c6c6;font-weight:normal;">|</span>
<span class="t" style="left:385.6px;top:550.7px;font-size:7.6px;color:#c6c6c6;transform:scaleX(0.891);">複製するオブジェクトを Alt キーを押しながらドラッグ</span>
<div class="b" style="left:51.8px;top:565.4px;width:33.7px;height:9.100000000000023px;background:#434343;"></div>
<span class="l" style="left:54px;top:566.28px;font-size:8px;line-height:9.60px;color:#dadada;font-weight:normal;">50%</span>
<svg class="g" style="left:86px;top:565.4px;" width="10" height="10"><path d="M2.8 3.9 L5 6.1 L7.2 3.9" fill="none" stroke="#cccccc" stroke-width="1.3" stroke-linecap="round" stroke-linejoin="round"/></svg>
<div class="b" style="left:100.5px;top:565.4px;width:33.5px;height:9.100000000000023px;background:#434343;"></div>
<span class="l" style="left:103px;top:566.28px;font-size:8px;line-height:9.60px;color:#dadada;font-weight:normal;">0°</span>
<svg class="g" style="left:134.8px;top:565.4px;" width="10" height="10"><path d="M2.8 3.9 L5 6.1 L7.2 3.9" fill="none" stroke="#cccccc" stroke-width="1.3" stroke-linecap="round" stroke-linejoin="round"/></svg>
<svg class="g" style="left:150px;top:566.6px;" width="10" height="8"><rect x="1.6" y="0.8" width="1.2" height="6" fill="#d4d4d4"/><path d="M7.6 0.8 L7.6 6.8 L3.4 3.8 Z" fill="#d4d4d4"/></svg>
<svg class="g" style="left:162px;top:566.6px;" width="8" height="8"><path d="M5.8 0.8 L5.8 6.8 L1.6 3.8 Z" fill="#d4d4d4"/></svg>
<div class="b" style="left:174px;top:565.4px;width:26.5px;height:9.100000000000023px;background:#434343;"></div>
<span class="l" style="left:176px;top:566.48px;font-size:8px;line-height:9.60px;color:#dadada;font-weight:normal;">2</span>
<svg class="g" style="left:201px;top:565.4px;" width="10" height="10"><path d="M2.8 3.9 L5 6.1 L7.2 3.9" fill="none" stroke="#cccccc" stroke-width="1.3" stroke-linecap="round" stroke-linejoin="round"/></svg>
<svg class="g" style="left:215.6px;top:566.6px;" width="8" height="8"><path d="M2.4 0.8 L2.4 6.8 L6.4 3.8 Z" fill="#6a6a6a"/></svg>
<svg class="g" style="left:226px;top:566.6px;" width="10" height="8"><path d="M2 0.8 L2 6.8 L6 3.8 Z" fill="#6a6a6a"/><rect x="6.8" y="0.8" width="1.1" height="6" fill="#6a6a6a"/></svg>
<div class="b" style="left:244px;top:565.4px;width:130px;height:9.100000000000023px;background:#484848;"></div>
<span class="t" style="left:301.3px;top:566.5px;font-size:6.4px;color:#d0d0d0;">選択</span>
<svg class="g" style="left:377px;top:566.6px;" width="8" height="8"><path d="M2 0.6 L2 7 L6.4 3.8 Z" fill="#dcdcdc"/></svg>
<svg class="g" style="left:389px;top:567px;" width="6" height="7"><path d="M4 0.8 L1.6 3.4 L4 6" fill="none" stroke="#8a8a8a" stroke-width="1"/></svg>
<div class="b" style="left:387px;top:565.4px;width:430px;height:9.100000000000023px;background:#4a4a4c;"></div>
<svg class="g" style="left:389px;top:567px;" width="6" height="7"><path d="M4 0.8 L1.6 3.4 L4 6" fill="none" stroke="#8a8a8a" stroke-width="1"/></svg>
<div class="b" style="left:592.5px;top:565.6px;width:16.5px;height:8.199999999999932px;background:#656767;border-radius:4px;"></div>
<svg class="g" style="left:808.6px;top:566.2px;" width="6" height="8"><path d="M1.8 1 L4.4 3.8 L1.8 6.6" fill="none" stroke="#c4c4c4" stroke-width="1.2"/></svg></div></body></html>
